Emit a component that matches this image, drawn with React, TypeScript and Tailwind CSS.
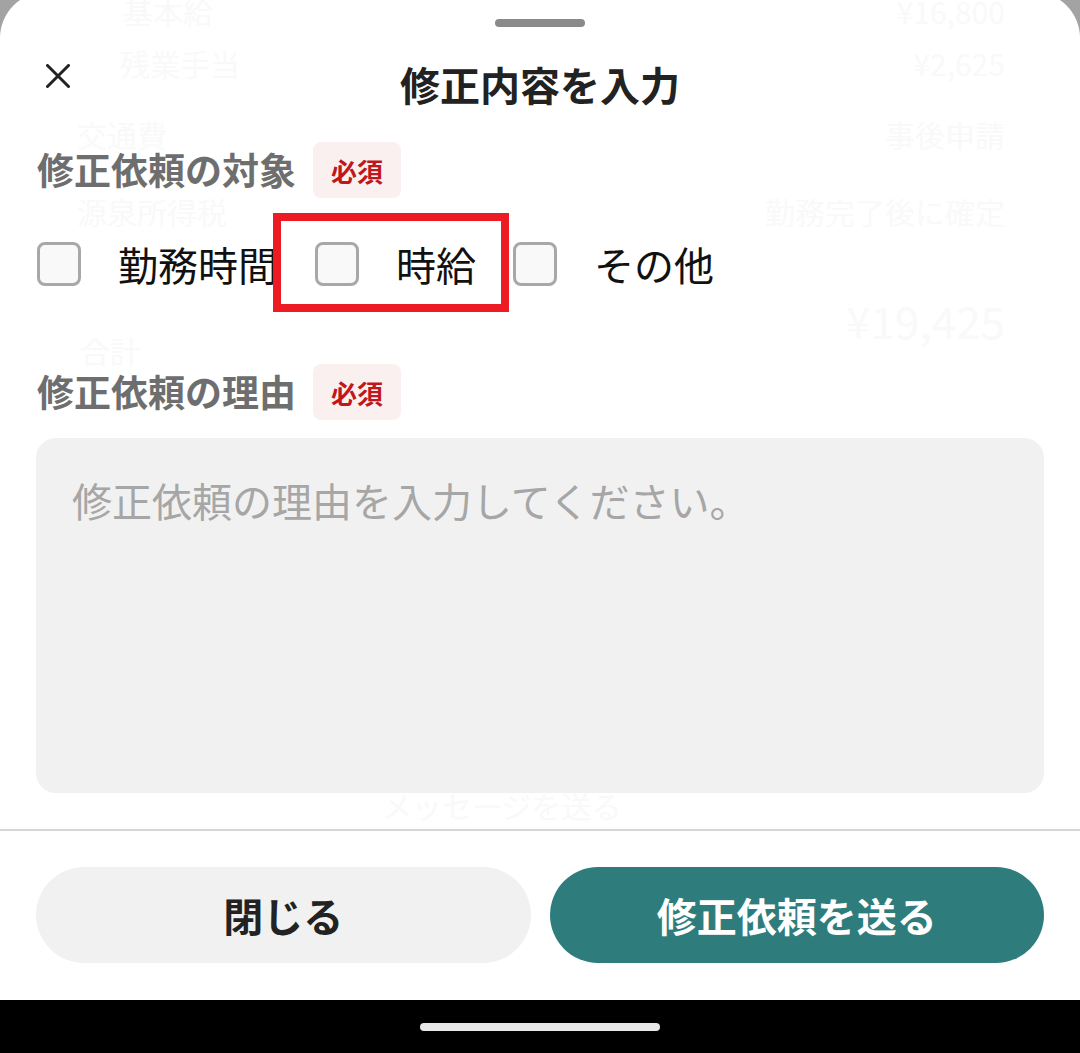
import React, { useState } from 'react'

type Option = { id: string; label: string }

const options: Option[] = [
  { id: 'hours', label: '勤務時間' },
  { id: 'wage', label: '時給' },
  { id: 'other', label: 'その他' },
]

// faint text of the page behind the sheet
const Ghost = () => (
  <div className="pointer-events-none absolute inset-x-0 top-[8px] text-[30px] leading-[34px] text-[#f9f9f9]">
    <span className="absolute left-[123px] top-[-6px]">基本給</span>
    <span className="absolute left-[120px] top-[46px]">残業手当</span>
    <span className="absolute left-[77px] top-[117px]">交通費</span>
    <span className="absolute left-[77px] top-[194px]">源泉所得税</span>
    <span className="absolute left-[80px] top-[333px]">合計</span>
    <span className="absolute right-[75px] top-[-6px]">¥16,800</span>
    <span className="absolute right-[75px] top-[46px]">¥2,625</span>
    <span className="absolute right-[75px] top-[117px]">事後申請</span>
    <span className="absolute right-[75px] top-[194px]">勤務完了後に確定</span>
    <span className="absolute right-[75px] top-[296px] text-[44px] leading-[48px]">¥19,425</span>
    <span className="absolute left-[382px] top-[788px]">メッセージを送る</span>
  </div>
)

const Required = () => (
  <span className="flex h-[56px] items-center rounded-[8px] bg-[#fbf0f0] px-[18px] text-[26px] font-bold text-[#c0171d]">
    必須
  </span>
)

export default function App() {
  const [checked, setChecked] = useState<Record<string, boolean>>({})
  const [reason, setReason] = useState('')

  const toggle = (id: string) => {
    setChecked((prev) => ({ ...prev, [id]: !prev[id] }))
  }

  return (
    <div className="flex h-[1053px] w-[1080px] flex-col overflow-hidden bg-[#a3a3a3] font-['Noto_Sans_CJK_JP','Noto_Sans',sans-serif]">
      <section className="relative -mt-2 flex flex-1 flex-col rounded-t-[46px] bg-white">
        <Ghost />
        {/* handle */}
        <div className="relative mx-auto mt-[27px] h-2 w-[90px] rounded-full bg-[#8a8a8a]"></div>

        {/* header */}
        <div className="relative mt-[29px] grid h-[56px] grid-cols-[1fr_auto_1fr]">
          <button className="mt-2 ml-[46px] h-6 w-6 self-start">
            <svg viewBox="0 0 24 24" className="h-6 w-6" fill="none" stroke="#222" strokeWidth="3" strokeLinecap="round">
              <path d="M1.5 1.5 L22.5 22.5 M22.5 1.5 L1.5 22.5" />
            </svg>
          </button>
          <h1 className="text-[40px] leading-[56px] font-bold text-[#222]">修正内容を入力</h1>
          <div></div>
        </div>

        {/* target */}
        <div className="relative mt-[30px] flex items-center gap-[17px] px-[37px]">
          <h2 className="text-[37px] font-bold text-[#6e6e6e]">修正依頼の対象</h2>
          <Required />
        </div>
        <div className="relative mt-[38px] flex h-[56px] items-center gap-[37px] px-[37px]">
          {options.map((o) => (
            <label key={o.id} className="flex cursor-pointer items-center gap-[37px]" onClick={() => toggle(o.id)}>
              <span
                className={
                  checked[o.id]
                    ? 'h-[44px] w-[44px] rounded-[8px] border-[3px] border-[#2e7d7c] bg-[#2e7d7c]'
                    : 'h-[44px] w-[44px] rounded-[8px] border-[3px] border-[#a8a8a8] bg-[#f9f9f9]'
                }
              ></span>
              <span className="text-[40px] leading-[56px] text-[#111]">{o.label}</span>
            </label>
          ))}
          {/* annotation */}
          <div className="pointer-events-none absolute left-[273px] top-[-23px] h-[99px] w-[236px] border-[8px] border-[#ed1c24]"></div>
        </div>

        {/* reason */}
        <div className="relative mt-[72px] flex items-center gap-[17px] px-[37px]">
          <h2 className="text-[37px] font-bold text-[#6e6e6e]">修正依頼の理由</h2>
          <Required />
        </div>
        <div className="relative mt-[18px] px-9">
          <textarea
            className="block h-[355px] w-full resize-none rounded-[20px] bg-[#f1f1f1] px-9 pt-[32px] text-[40px] leading-[60px] text-[#222] placeholder:text-[#a6a6a6] focus:outline-none"
            placeholder="修正依頼の理由を入力してください。"
            value={reason}
            onChange={(e) => setReason(e.target.value)}
          />
        </div>

        <div className="relative mt-[36px] h-[2px] w-full bg-[#d6d6d6]"></div>

        <div className="relative mt-[36px] flex gap-[19px] px-9">
          <button className="h-[96px] flex-1 rounded-full bg-[#f1f1f1] text-[40px] font-bold text-[#222]">閉じる</button>
          <button className="h-[96px] flex-1 rounded-full bg-[#2e7d7c] text-[40px] font-bold text-white">修正依頼を送る</button>
        </div>
      </section>

      {/* system nav */}
      <div className="h-[53px] bg-black pt-[23px]">
        <div className="mx-auto h-2 w-[240px] rounded-full bg-[#e8e8e8]"></div>
      </div>
    </div>
  )
}
